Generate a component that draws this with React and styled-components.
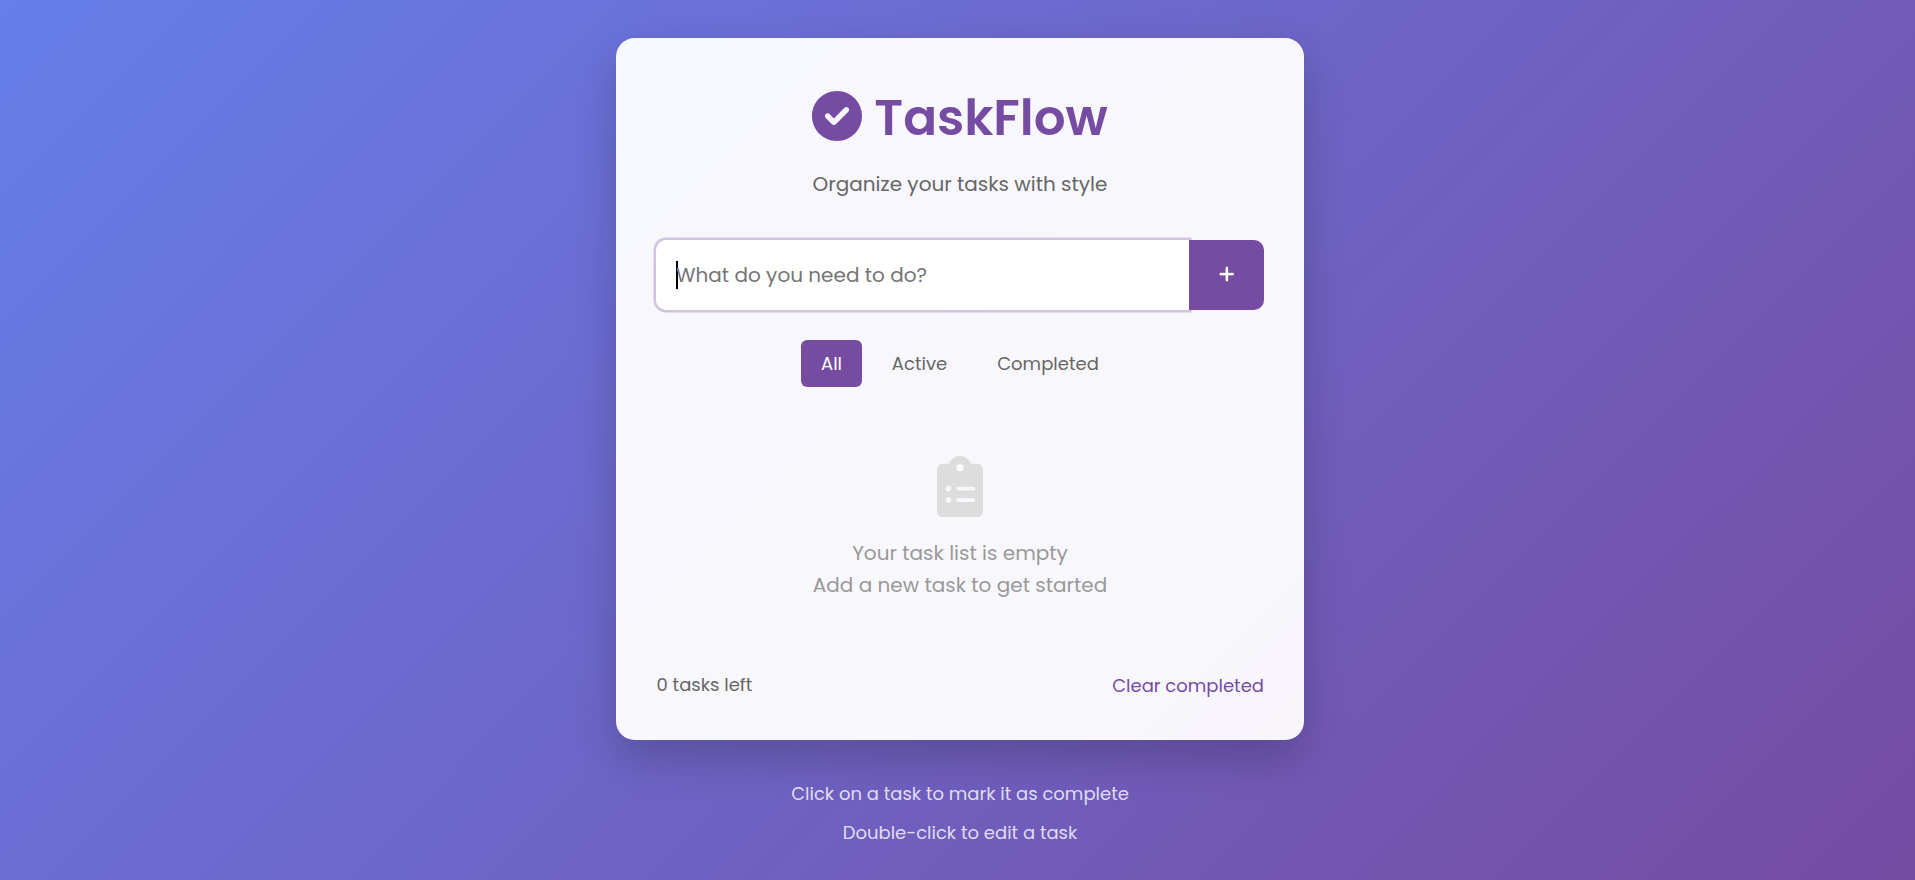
import React from "react";
import styled, { createGlobalStyle } from "styled-components";

const Global = createGlobalStyle`
  * { box-sizing: border-box; margin: 0; padding: 0; }
  body {
    min-height: 880px;
    overflow: hidden;
    background: linear-gradient(135deg, #667eea, #764ba2) no-repeat;
    font-family: Poppins, Inter, "Open Sans", sans-serif;
    color: #666;
  }
  button, input { font: inherit; border: 0; }
`;

const Page = styled.div`
  height: 880px;
  padding: 38px 0 0 5px;
  display: flex;
  flex-direction: column;
  align-items: center;
`;

const Card = styled.main`
  width: 688px;
  height: 702px;
  padding: 40px;
  display: flex;
  flex-direction: column;
  background: rgba(255, 255, 255, 0.95);
  border-radius: 18.75px;
  box-shadow: 0 18.75px 43.75px rgba(0, 0, 0, 0.2);
`;

const Icon = styled.svg`
  display: block;
  flex: none;
  width: ${(p) => p.$width}px;
  height: ${(p) => p.$height}px;
  fill: currentColor;
`;

const Header = styled.header`
  display: flex;
  flex-direction: column;
  align-items: center;
`;

const Title = styled.h1`
  height: 76px;
  display: flex;
  align-items: center;
  gap: 12px;
  color: #764ba2;
  font-size: 50px;
  font-weight: 600;
  line-height: 72px;
`;

const TitleText = styled.span`
  padding-top: 4px;
  letter-spacing: -0.05px;
`;

const Subtitle = styled.p`
  margin-top: 14px;
  font-size: 20px;
  line-height: 32px;
`;

const Form = styled.form`
  margin-top: 40px;
  height: 70px;
  display: flex;
`;

const Field = styled.label`
  flex: 1;
  padding-left: 20px;
  display: flex;
  align-items: center;
  background: #fff;
  border-radius: 10px 0 0 10px;
  box-shadow: 0 0 0 2.5px rgba(118, 75, 162, 0.3);
  color: #757575;
  font-size: 20px;
  line-height: 30px;
`;

const Caret = styled.i`
  width: 2px;
  height: 28px;
  margin-right: -2px;
  background: #000;
`;

const AddButton = styled.button`
  position: relative;
  width: 75px;
  display: flex;
  align-items: center;
  justify-content: center;
  padding: 0 0 2px 0;
  color: #fff;
  background: #764ba2;
  border-radius: 0 10px 10px 0;
  path { stroke: currentColor; stroke-width: 8; }
`;

const Filters = styled.nav`
  margin-top: 30px;
  display: flex;
  justify-content: center;
  gap: 10px;
`;

const Filter = styled.button`
  width: ${(p) => p.$width}px;
  height: 47px;
  display: flex;
  align-items: center;
  justify-content: center;
  border-radius: 6.25px;
  font-size: 18px;
  color: ${(p) => (p.$active ? "#fff" : "#666")};
  background: ${(p) => (p.$active ? "#764ba2" : "transparent")};
`;

const Empty = styled.section`
  flex: 1;
  padding-top: 69px;
  display: flex;
  flex-direction: column;
  align-items: center;
  color: #999;
`;

const EmptyIcon = styled.div`
  color: #ddd;
  height: 81px;
`;

const EmptyLine = styled.p`
  font-size: 20px;
  line-height: 32px;
`;

const Footer = styled.footer`
  height: 31px;
  padding-left: 0.5px;
  display: flex;
  justify-content: space-between;
  font-size: 18px;
  line-height: 31px;
`;

const ClearButton = styled.button`
  padding-top: 1px;
  background: transparent;
  color: #764ba2;
`;

const Hints = styled.div`
  margin-top: 39px;
  display: flex;
  flex-direction: column;
  align-items: center;
  gap: 10px;
  color: rgba(255, 255, 255, 0.8);
  font-size: 18px;
  line-height: 29px;
`;

export default function App() {
  return (
    <>
      <Global />
      <Page>
        <Card>
          <Header>
            <Title>
              <Icon viewBox="0 0 512 512" $width={50} $height={50}>
                <path d="M0 256C0 114.6 114.6 0 256 0C397.4 0 512 114.6 512 256C512 397.4 397.4 512 256 512C114.6 512 0 397.4 0 256zM371.8 211.8C382.7 200.9 382.7 183.1 371.8 172.2C360.9 161.3 343.1 161.3 332.2 172.2L224 280.4L179.8 236.2C168.9 225.3 151.1 225.3 140.2 236.2C129.3 247.1 129.3 264.9 140.2 275.8L204.2 339.8C215.1 350.7 232.9 350.7 243.8 339.8L371.8 211.8z" />
              </Icon>
              <TitleText>TaskFlow</TitleText>
            </Title>
            <Subtitle>Organize your tasks with style</Subtitle>
          </Header>
          <Form onSubmit={(e) => e.preventDefault()}>
            <Field>
              <Caret />
              <span>What do you need to do?</span>
            </Field>
            <AddButton aria-label="Add">
              <Icon viewBox="0 0 448 512" $width={15.75} $height={18}>
                <path d="M432 256c0 17.69-14.33 32.01-32 32.01H256v144c0 17.69-14.33 31.99-32 31.99s-32-14.3-32-31.99v-144H48c-17.67 0-32-14.32-32-32.01s14.33-31.99 32-31.99H192v-144c0-17.69 14.33-32.01 32-32.01s32 14.32 32 32.01v144h144C417.7 224 432 238.3 432 256z" />
              </Icon>
            </AddButton>
          </Form>
          <Filters>
            <Filter $active $width={61}>All</Filter>
            <Filter $width={95}>Active</Filter>
            <Filter $width={142}>Completed</Filter>
          </Filters>
          <Empty>
            <EmptyIcon>
              <Icon viewBox="0 0 384 512" $width={46} $height={61.33}>
                <path d="M336 64h-53.88C268.9 26.8 233.7 0 192 0S115.1 26.8 101.9 64H48C21.5 64 0 85.48 0 112v352C0 490.5 21.5 512 48 512h288c26.5 0 48-21.48 48-48v-352C384 85.48 362.5 64 336 64zM96 392c-13.25 0-24-10.75-24-24S82.75 344 96 344s24 10.75 24 24S109.3 392 96 392zM96 296c-13.25 0-24-10.75-24-24S82.75 248 96 248S120 258.8 120 272S109.3 296 96 296zM192 64c17.67 0 32 14.33 32 32c0 17.67-14.33 32-32 32S160 113.7 160 96C160 78.33 174.3 64 192 64zM304 384h-128C167.2 384 160 376.8 160 368C160 359.2 167.2 352 176 352h128c8.836 0 16 7.164 16 16C320 376.8 312.8 384 304 384zM304 288h-128C167.2 288 160 280.8 160 272C160 263.2 167.2 256 176 256h128C312.8 256 320 263.2 320 272C320 280.8 312.8 288 304 288z" />
              </Icon>
            </EmptyIcon>
            <EmptyLine>Your task list is empty</EmptyLine>
            <EmptyLine>Add a new task to get started</EmptyLine>
          </Empty>
          <Footer>
            <span>0 tasks left</span>
            <ClearButton>Clear completed</ClearButton>
          </Footer>
        </Card>
        <Hints>
          <p>Click on a task to mark it as complete</p>
          <p>Double-click to edit a task</p>
        </Hints>
      </Page>
    </>
  );
}
